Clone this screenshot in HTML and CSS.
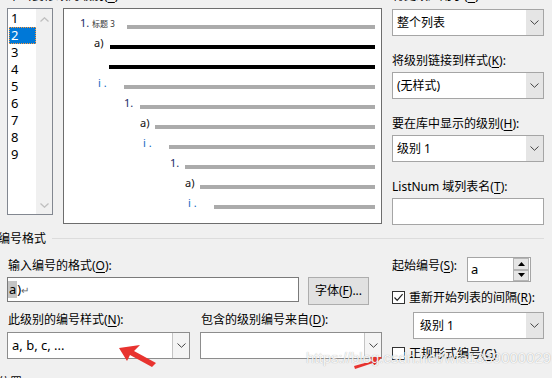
FILE: index.html
```html
<!DOCTYPE html>
<html lang="zh-CN">

<head>
    <meta charset="UTF-8">
    <title>定义新多级列表</title>
    <link rel="stylesheet" href="styles.css">
</head>

<body>
    <div class="dialog">
        <div class="top">
            <div class="lbl lbl-levels">单击要修改的级别(<u>V</u>):</div>
            <div class="lbl">将更改应用于(<u>C</u>):</div>

            <div class="levels">
                <ul class="level-list">
                    <li>1</li>
                    <li class="sel">2</li>
                    <li>3</li>
                    <li>4</li>
                    <li>5</li>
                    <li>6</li>
                    <li>7</li>
                    <li>8</li>
                    <li>9</li>
                </ul>
                <div class="vscroll">
                    <svg width="9" height="5" viewBox="0 0 9 5"><path d="M0.5 4.5 L4.5 0.8 L8.5 4.5" fill="none" stroke="#bfbfbf" stroke-width="1.3"/></svg>
                    <svg width="9" height="5" viewBox="0 0 9 5"><path d="M0.5 0.5 L4.5 4.2 L8.5 0.5" fill="none" stroke="#bfbfbf" stroke-width="1.3"/></svg>
                </div>
            </div>

            <div class="preview">
                <div class="pv-row" style="padding-left:16px"><span class="pv-num n1" style="width:47px">1. <small>标题 3</small></span><span class="pv-bar"></span></div>
                <div class="pv-row" style="padding-left:30px"><span class="pv-num" style="width:16px">a)</span><span class="pv-bar dark"></span></div>
                <div class="pv-row" style="padding-left:45px"><span class="pv-bar dark"></span></div>
                <div class="pv-row" style="padding-left:33px"><span class="pv-num ni" style="width:27px">i .</span><span class="pv-bar"></span></div>
                <div class="pv-row" style="padding-left:60px"><span class="pv-num n1" style="width:16px">1.</span><span class="pv-bar"></span></div>
                <div class="pv-row" style="padding-left:76px"><span class="pv-num" style="width:15px">a)</span><span class="pv-bar"></span></div>
                <div class="pv-row" style="padding-left:78px"><span class="pv-num ni" style="width:27px">i .</span><span class="pv-bar"></span></div>
                <div class="pv-row" style="padding-left:106px"><span class="pv-num n1" style="width:15px">1.</span><span class="pv-bar"></span></div>
                <div class="pv-row" style="padding-left:121px"><span class="pv-num" style="width:15px">a)</span><span class="pv-bar"></span></div>
                <div class="pv-row" style="padding-left:123px"><span class="pv-num ni" style="width:27px">i .</span><span class="pv-bar"></span></div>
            </div>

            <div class="side">
                <div class="select">
                    <span class="val">整个列表</span>
                    <span class="drop"><svg width="9" height="5" viewBox="0 0 9 5"><path d="M0.5 0.5 L4.5 4.3 L8.5 0.5" fill="none" stroke="#444"/></svg></span>
                </div>
                <div class="field">
                    <div class="lbl">将级别链接到样式(<u>K</u>):</div>
                    <div class="select">
                        <span class="val">(无样式)</span>
                        <span class="drop"><svg width="9" height="5" viewBox="0 0 9 5"><path d="M0.5 0.5 L4.5 4.3 L8.5 0.5" fill="none" stroke="#444"/></svg></span>
                    </div>
                </div>
                <div class="field">
                    <div class="lbl">要在库中显示的级别(<u>H</u>):</div>
                    <div class="select">
                        <span class="val">级别 1</span>
                        <span class="drop"><svg width="9" height="5" viewBox="0 0 9 5"><path d="M0.5 0.5 L4.5 4.3 L8.5 0.5" fill="none" stroke="#444"/></svg></span>
                    </div>
                </div>
                <div class="field">
                    <div class="lbl">ListNum 域列表名(<u>T</u>):</div>
                    <div class="textbox"></div>
                </div>
            </div>
        </div>

        <div class="group-title"><span>编号格式</span><i></i></div>

        <div class="format">
            <div class="fmt-left">
                <div class="lbl first">输入编号的格式(<u>O</u>):</div>
                <div class="input-row">
                    <div class="input"><span class="hl">a</span>)<span class="ret">↵</span></div>
                    <div class="button">字体(<u>F</u>)...</div>
                </div>
                <div class="select-row">
                    <div>
                        <div class="lbl">此级别的编号样式(<u>N</u>):</div>
                        <div class="select">
                            <span class="val">a, b, c, ...</span>
                            <span class="drop line"><svg width="9" height="5" viewBox="0 0 9 5"><path d="M0.5 0.5 L4.5 4.3 L8.5 0.5" fill="none" stroke="#444"/></svg></span>
                        </div>
                    </div>
                    <div>
                        <div class="lbl">包含的级别编号来自(<u>D</u>):</div>
                        <div class="select">
                            <span class="val"></span>
                            <span class="drop line"><svg width="9" height="5" viewBox="0 0 9 5"><path d="M0.5 0.5 L4.5 4.3 L8.5 0.5" fill="none" stroke="#444"/></svg></span>
                        </div>
                    </div>
                </div>
            </div>

            <div class="fmt-right">
                <div class="spin-row">
                    <div class="lbl spin-lbl">起始编号(<u>S</u>):</div>
                    <div class="spin">
                        <span class="val">a</span>
                        <span class="spin-btns">
                            <span><svg width="7" height="4" viewBox="0 0 7 4"><path d="M0 4 L3.5 0 L7 4 Z" fill="#000"/></svg></span>
                            <span><svg width="7" height="4" viewBox="0 0 7 4"><path d="M0 0 L3.5 4 L7 0 Z" fill="#000"/></svg></span>
                        </span>
                    </div>
                </div>
                <div class="check-row">
                    <span class="check"><svg width="11" height="11" viewBox="0 0 11 11"><path d="M1.5 5.5 L4.2 8.3 L9.6 2.2" fill="none" stroke="#222" stroke-width="1.2"/></svg></span>
                    <span>重新开始列表的间隔(<u>R</u>):</span>
                </div>
                <div class="select indent">
                    <span class="val">级别 1</span>
                    <span class="drop"><svg width="9" height="5" viewBox="0 0 9 5"><path d="M0.5 0.5 L4.5 4.3 L8.5 0.5" fill="none" stroke="#444"/></svg></span>
                </div>
                <div class="check-row second">
                    <span class="check"></span>
                    <span>正规形式编号(<u>G</u>)</span>
                </div>
            </div>
        </div>

        <div class="group-title pos"><span>位置</span><i></i></div>
    </div>

    <svg class="arrow" width="552" height="378" viewBox="0 0 552 378">
        <polygon points="119,348 140,345 134,351 156,363 152,367 130,355 127,361" fill="#e8332f"/>
        <polygon points="354,366 372,361 370,357 382,357 374,366 373,363 355,369" fill="#e8332f"/>
    </svg>
    <div class="watermark">https://blog.csdn.net/wfa1339000029</div>
</body>

</html>
```

FILE: styles.css
```css
* {
    box-sizing: border-box;
}

body {
    margin: 0;
    width: 552px;
    height: 378px;
    overflow: hidden;
    position: relative;
    background-color: #f0f0f0;
    font-family: "Noto Sans", "Noto Sans CJK SC", sans-serif;
    font-size: 12px;
    color: #000;
}

u {
    text-decoration-thickness: 1px;
    text-underline-offset: 2px;
}

.dialog {
    padding-left: 7px;
}

.lbl {
    height: 16px;
    line-height: 16px;
    white-space: nowrap;
}

.top {
    display: grid;
    grid-template-columns: 46px 319px 152px;
    column-gap: 10px;
    row-gap: 4px;
    margin-top: -12px;
}

.lbl-levels {
    grid-column: 1 / 3;
    padding-left: 1px;
}

/* level list */
.levels {
    height: 207px;
    border: 1px solid #828790;
    background-color: #fff;
    display: flex;
}

.level-list {
    list-style: none;
    margin: 0;
    padding: 1px 0 0 1px;
    width: 28px;
}

.level-list li {
    height: 17px;
    line-height: 17px;
    padding-left: 2px;
    font-size: 13px;
}

.level-list li.sel {
    background-color: #0078d7;
    color: #fff;
    outline: 1px dotted #ff9a3c;
    outline-offset: -1px;
}

.vscroll {
    width: 16px;
    background-color: #f0f0f0;
    display: flex;
    flex-direction: column;
    justify-content: space-between;
    align-items: center;
    padding: 8px 0 6px 1px;
}

.vscroll svg {
    display: block;
}

/* preview */
.preview {
    height: 216px;
    border: 1px solid #6d6d6d;
    background-color: #fff;
    padding-top: 4px;
}

.pv-row {
    display: flex;
    align-items: center;
    height: 20px;
    margin-right: 6px;
}

.pv-num {
    flex: none;
    font-size: 11px;
    line-height: 12px;
    white-space: nowrap;
    color: #111;
}

.pv-num small {
    font-size: 8px;
    color: #333;
}

.pv-num.n1 {
    color: #1b2a66;
}

.pv-num.ni {
    color: #1565c0;
    padding-left: 1px;
}

.pv-bar {
    flex: 1;
    height: 4px;
    margin-top: 8px;
    background-color: #ababab;
}

.pv-bar.dark {
    background-color: #000;
}

/* right column */
.side {
    display: flex;
    flex-direction: column;
    padding-top: 1px;
}

.field {
    margin-top: 17px;
}

.field .lbl {
    margin-bottom: 3px;
}

.select {
    height: 27px;
    border: 1px solid #a5a5a5;
    background-color: #fff;
    display: flex;
}

.select .val {
    flex: 1;
    padding-left: 4px;
    line-height: 25px;
    white-space: nowrap;
}

.drop {
    width: 17px;
    background-color: #e5e5e5;
    display: flex;
    align-items: center;
    justify-content: center;
}

.drop.line {
    border-left: 1px solid #c4c4c4;
    background-color: #f4f4f4;
}

.drop svg {
    display: block;
}

.textbox {
    height: 27px;
    border: 1px solid #a5a5a5;
    background-color: #fff;
}

/* group headings */
.group-title {
    display: flex;
    align-items: center;
    height: 16px;
    margin: 5px 8px 0 -9px;
}

.group-title i {
    flex: 1;
    height: 1px;
    margin-left: 6px;
    background-color: #dcdcdc;
}

.group-title.pos {
    margin-top: 13px;
}

/* number format */
.format {
    display: grid;
    grid-template-columns: 375px 152px;
    column-gap: 10px;
}

.fmt-left .first {
    margin-top: 12px;
    padding-left: 1px;
}

.input-row {
    display: flex;
    gap: 9px;
    margin-top: 3px;
    align-items: flex-start;
}

.input {
    width: 292px;
    height: 25px;
    border: 1px solid #7a7a7a;
    background-color: #fff;
    padding: 3px 0 0 0;
    line-height: 17px;
    font-size: 13px;
}

.input .hl {
    display: inline-block;
    background-color: #c4c4c4;
    padding: 0 1px;
}

.input .ret {
    font-size: 10px;
    color: #666;
}

.button {
    width: 61px;
    height: 28px;
    border: 1px solid #adadad;
    background-color: #e1e1e1;
    text-align: center;
    line-height: 26px;
}

.select-row {
    display: grid;
    grid-template-columns: 183px 182px;
    column-gap: 10px;
    margin-top: 7px;
}

.select-row .lbl {
    margin-bottom: 4px;
    padding-left: 1px;
}

.select-row .select {
    border-color: #8d8d8d;
}

.select-row .val {
    font-size: 13px;
}

.fmt-right {
    display: flex;
    flex-direction: column;
}

.spin-row {
    display: flex;
    margin-top: 11px;
}

.spin-lbl {
    width: 75px;
    margin-top: 1px;
}

.spin {
    width: 64px;
    height: 25px;
    border: 1px solid #a5a5a5;
    background-color: #fff;
    display: flex;
}

.spin .val {
    flex: 1;
    padding-left: 3px;
    line-height: 23px;
    font-size: 13px;
}

.spin-btns {
    width: 17px;
    display: flex;
    flex-direction: column;
    padding: 0 1px 0 0;
}

.spin-btns span {
    flex: 1;
    background-color: #e5e5e5;
    border: 1px solid #b5b5b5;
    display: flex;
    align-items: center;
    justify-content: center;
}

.spin-btns svg {
    display: block;
}

.check-row {
    display: flex;
    align-items: center;
    height: 16px;
    margin-top: 7px;
    white-space: nowrap;
}

.check-row.second {
    margin-top: 6px;
}

.check {
    width: 13px;
    height: 13px;
    border: 1px solid #333;
    background-color: #fff;
    margin-right: 4px;
    display: flex;
    align-items: center;
    justify-content: center;
}

.check svg {
    display: block;
}

.select.indent {
    margin: 7px 0 0 21px;
}

.select.indent .val {
    padding-left: 6px;
}

/* overlays */
.arrow {
    position: absolute;
    left: 0;
    top: 0;
    pointer-events: none;
}

.watermark {
    position: absolute;
    left: 306px;
    top: 349px;
    font-family: "Liberation Sans", sans-serif;
    font-size: 15px;
    color: rgba(255, 255, 255, 0.9);
    text-shadow: 0 0 1px rgba(0, 0, 0, 0.35);
    white-space: nowrap;
    pointer-events: none;
}
```
